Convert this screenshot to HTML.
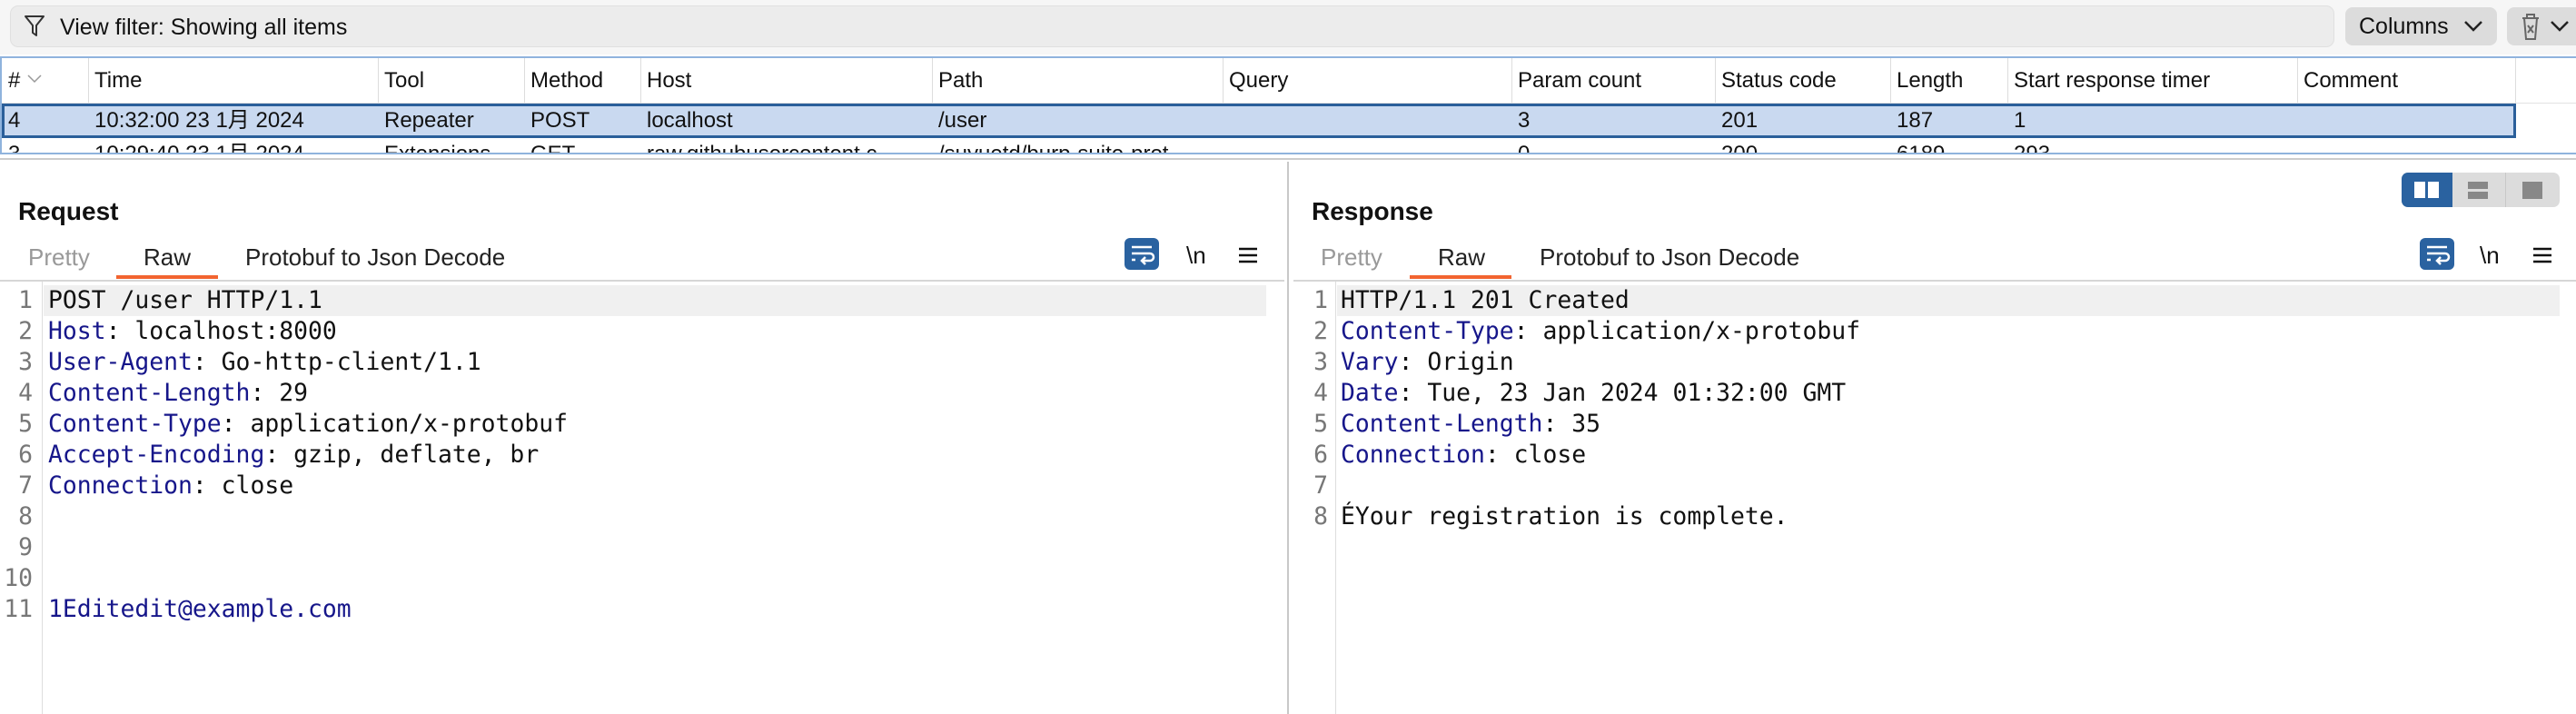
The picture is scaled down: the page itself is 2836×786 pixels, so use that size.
<!DOCTYPE html>
<html><head><meta charset="utf-8"><style>
*{margin:0;padding:0;box-sizing:border-box}
body{width:2836px;height:786px;overflow:hidden;background:#fff;font-family:"Liberation Sans","Noto Sans CJK SC",sans-serif;color:#111;position:relative}
.a{position:absolute;white-space:nowrap}
.t{font-size:24px;line-height:28px}
.mono{font-family:"DejaVu Sans Mono","Liberation Mono",monospace;font-size:26.4px;line-height:34px}
.k{color:#16168a}
.ln{color:#777;text-align:right;width:40px}
.tab{font-size:26px;line-height:30px;color:#222}
</style></head><body>
<!-- top bar -->
<div class="a" style="left:0;top:0;width:2836px;height:60px;background:#f6f6f6"></div>
<div class="a" style="left:11px;top:6px;width:2559px;height:46px;background:#ececec;border:1px solid #e0e0e0;border-radius:9px"></div>
<svg class="a" style="left:26px;top:16px" width="24" height="26" viewBox="0 0 24 26"><path d="M2 2h20l-8 10v11l-4-3v-8z" fill="none" stroke="#333" stroke-width="2" stroke-linejoin="round"/></svg>
<div class="a t" style="left:66px;top:16px;font-size:25px">View filter: Showing all items</div>
<div class="a" style="left:2582px;top:8px;width:167px;height:42px;background:#dcdcdc;border-radius:8px"></div>
<div class="a t" style="left:2597px;top:15px;font-size:25px">Columns</div>
<svg class="a" style="left:2712px;top:22px" width="22" height="14"><path d="M2 2l9 9 9-9" fill="none" stroke="#222" stroke-width="2.5"/></svg>
<div class="a" style="left:2760px;top:8px;width:90px;height:42px;background:#dcdcdc;border-radius:8px"></div>
<svg class="a" style="left:2773px;top:12px" width="26" height="34"><path d="M4 8h18M9 8V4h8v4M6 8l2 23h10l2-23M10 16l6 8M16 16l-6 8" fill="none" stroke="#666" stroke-width="2"/></svg>
<svg class="a" style="left:2807px;top:22px" width="22" height="14"><path d="M2 2l9 9 9-9" fill="none" stroke="#222" stroke-width="2.5"/></svg>

<!-- table -->
<div class="a" style="left:0;top:62px;width:2836px;height:2px;background:#8fb3dd"></div>
<div class="a" style="left:0;top:113px;width:2836px;height:1px;background:#e2e2e2"></div>
<div class="a" style="left:0;top:64px;width:2px;height:106px;background:#8fb3dd"></div>
<div class="a" style="left:97px;top:64px;width:1px;height:49px;background:#ddd"></div>
<div class="a" style="left:416px;top:64px;width:1px;height:49px;background:#ddd"></div>
<div class="a" style="left:577px;top:64px;width:1px;height:49px;background:#ddd"></div>
<div class="a" style="left:705px;top:64px;width:1px;height:49px;background:#ddd"></div>
<div class="a" style="left:1026px;top:64px;width:1px;height:49px;background:#ddd"></div>
<div class="a" style="left:1346px;top:64px;width:1px;height:49px;background:#ddd"></div>
<div class="a" style="left:1664px;top:64px;width:1px;height:49px;background:#ddd"></div>
<div class="a" style="left:1888px;top:64px;width:1px;height:49px;background:#ddd"></div>
<div class="a" style="left:2081px;top:64px;width:1px;height:49px;background:#ddd"></div>
<div class="a" style="left:2210px;top:64px;width:1px;height:49px;background:#ddd"></div>
<div class="a" style="left:2529px;top:64px;width:1px;height:49px;background:#ddd"></div>
<div class="a" style="left:2769px;top:64px;width:1px;height:49px;background:#ddd"></div>
<div class="a t" style="left:9px;top:75px">#</div>
<svg class="a" style="left:30px;top:82px" width="16" height="10"><path d="M1 1l7 7 7-7" fill="none" stroke="#999" stroke-width="1.5"/></svg>
<div class="a t" style="left:104px;top:75px">Time</div>
<div class="a t" style="left:423px;top:75px">Tool</div>
<div class="a t" style="left:584px;top:75px">Method</div>
<div class="a t" style="left:712px;top:75px">Host</div>
<div class="a t" style="left:1033px;top:75px">Path</div>
<div class="a t" style="left:1353px;top:75px">Query</div>
<div class="a t" style="left:1671px;top:75px">Param count</div>
<div class="a t" style="left:1895px;top:75px">Status code</div>
<div class="a t" style="left:2088px;top:75px">Length</div>
<div class="a t" style="left:2217px;top:75px">Start response timer</div>
<div class="a t" style="left:2536px;top:75px">Comment</div>
<div class="a" style="left:2px;top:114px;width:2768px;height:38px;background:#c9d9f0;border:3px solid #2a5f9a"></div>
<div class="a t" style="left:9px;top:119px">4</div>
<div class="a t" style="left:104px;top:119px">10:32:00 23 1月 2024</div>
<div class="a t" style="left:423px;top:119px">Repeater</div>
<div class="a t" style="left:584px;top:119px">POST</div>
<div class="a t" style="left:712px;top:119px">localhost</div>
<div class="a t" style="left:1033px;top:119px">/user</div>
<div class="a t" style="left:1671px;top:119px">3</div>
<div class="a t" style="left:1895px;top:119px">201</div>
<div class="a t" style="left:2088px;top:119px">187</div>
<div class="a t" style="left:2217px;top:119px">1</div>
<div class="a" style="left:0;top:152px;width:2836px;height:16px;overflow:hidden">
<div class="a t" style="left:9px;top:4px">3</div>
<div class="a t" style="left:104px;top:4px">10:29:40 23 1月 2024</div>
<div class="a t" style="left:423px;top:4px">Extensions</div>
<div class="a t" style="left:584px;top:4px">GET</div>
<div class="a t" style="left:712px;top:4px">raw.githubusercontent.c</div>
<div class="a t" style="left:1033px;top:4px">/suyuetd/burp-suite-prot</div>
<div class="a t" style="left:1671px;top:4px">0</div>
<div class="a t" style="left:1895px;top:4px">200</div>
<div class="a t" style="left:2088px;top:4px">6189</div>
<div class="a t" style="left:2217px;top:4px">293</div>
</div>
<div class="a" style="left:0;top:168px;width:2836px;height:2px;background:#8fb3dd"></div>
<div class="a" style="left:0;top:174px;width:2836px;height:2px;background:#ccc"></div>

<!-- pane divider -->
<div class="a" style="left:1417px;top:178px;width:2px;height:608px;background:#c8c8c8"></div>

<!-- request pane -->
<div class="a" style="left:20px;top:216px;font-size:28px;font-weight:bold;line-height:34px">Request</div>
<div class="a tab" style="left:31px;top:268px;color:#999">Pretty</div>
<div class="a tab" style="left:158px;top:268px">Raw</div>
<div class="a" style="left:128px;top:303px;width:112px;height:4px;background:#f26430"></div>
<div class="a tab" style="left:270px;top:268px">Protobuf to Json Decode</div>
<div class="a" style="left:1238px;top:262px;width:38px;height:35px;background:#2a62a0;border-radius:6px"></div>
<svg class="a" style="left:1238px;top:262px" width="38" height="35"><path d="M8 10h22M8 17h20a4 4 0 0 1 0 8h-8M23 21l-4 4 4 4M8 24h4" fill="none" stroke="#fff" stroke-width="2.5"/></svg>
<div class="a tab" style="left:1306px;top:266px;color:#111">\n</div>
<svg class="a" style="left:1364px;top:272px" width="20" height="18"><path d="M0 2h20M0 9h20M0 16h20" stroke="#111" stroke-width="2.5"/></svg>
<div class="a" style="left:0;top:308px;width:1414px;height:2px;background:#d6d6d6"></div>
<div class="a" style="left:46px;top:310px;width:1px;height:476px;background:#ddd"></div>
<div class="a" style="left:48px;top:314px;width:1346px;height:34px;background:#f0f0f0"></div>
<div class="a mono ln" style="left:-4px;top:314px">1<br>2<br>3<br>4<br>5<br>6<br>7<br>8<br>9<br>10<br>11</div>
<div class="a mono" style="left:53px;top:314px">POST /user HTTP/1.1<br><span class="k">Host</span>: localhost:8000<br><span class="k">User-Agent</span>: Go-http-client/1.1<br><span class="k">Content-Length</span>: 29<br><span class="k">Content-Type</span>: application/x-protobuf<br><span class="k">Accept-Encoding</span>: gzip, deflate, br<br><span class="k">Connection</span>: close<br><br><br><br><span class="k">1Editedit@example.com</span></div>

<!-- response pane -->
<div class="a" style="left:1444px;top:216px;font-size:28px;font-weight:bold;line-height:34px">Response</div>
<div class="a" style="left:2644px;top:190px;width:174px;height:38px;background:#dcdcdc;border-radius:7px;overflow:hidden">
<div class="a" style="left:0;top:0;width:56px;height:38px;background:#2a62a0"></div>
<div class="a" style="left:14px;top:10px;width:12px;height:18px;background:#fff"></div>
<div class="a" style="left:29px;top:10px;width:12px;height:18px;background:#fff"></div>
<div class="a" style="left:114px;top:0;width:1px;height:38px;background:#c8c8c8"></div>
<div class="a" style="left:73px;top:10px;width:22px;height:8px;background:#888"></div>
<div class="a" style="left:73px;top:21px;width:22px;height:8px;background:#888"></div>
<div class="a" style="left:133px;top:10px;width:22px;height:19px;background:#888"></div>
</div>
<div class="a tab" style="left:1454px;top:268px;color:#999">Pretty</div>
<div class="a tab" style="left:1583px;top:268px">Raw</div>
<div class="a" style="left:1552px;top:303px;width:112px;height:4px;background:#f26430"></div>
<div class="a tab" style="left:1695px;top:268px">Protobuf to Json Decode</div>
<div class="a" style="left:2664px;top:262px;width:38px;height:35px;background:#2a62a0;border-radius:6px"></div>
<svg class="a" style="left:2664px;top:262px" width="38" height="35"><path d="M8 10h22M8 17h20a4 4 0 0 1 0 8h-8M23 21l-4 4 4 4M8 24h4" fill="none" stroke="#fff" stroke-width="2.5"/></svg>
<div class="a tab" style="left:2730px;top:266px;color:#111">\n</div>
<svg class="a" style="left:2789px;top:272px" width="20" height="18"><path d="M0 2h20M0 9h20M0 16h20" stroke="#111" stroke-width="2.5"/></svg>
<div class="a" style="left:1424px;top:308px;width:1412px;height:2px;background:#d6d6d6"></div>
<div class="a" style="left:1470px;top:310px;width:1px;height:476px;background:#ddd"></div>
<div class="a" style="left:1472px;top:314px;width:1346px;height:34px;background:#f0f0f0"></div>
<div class="a mono ln" style="left:1422px;top:314px">1<br>2<br>3<br>4<br>5<br>6<br>7<br>8</div>
<div class="a mono" style="left:1476px;top:314px">HTTP/1.1 201 Created<br><span class="k">Content-Type</span>: application/x-protobuf<br><span class="k">Vary</span>: Origin<br><span class="k">Date</span>: Tue, 23 Jan 2024 01:32:00 GMT<br><span class="k">Content-Length</span>: 35<br><span class="k">Connection</span>: close<br><br>ÉYour registration is complete.</div>
</body></html>
